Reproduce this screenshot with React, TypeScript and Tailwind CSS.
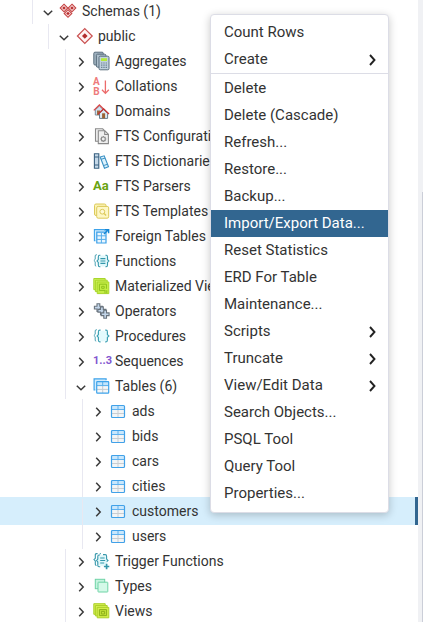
import type { ReactNode } from "react";

const chevronDown = <path d="M2.8 6.7 7 10.7 11.2 6.7" />;
const chevronRight = <path d="M5.2 3.8 9.2 8 5.2 12.2" />;

function Chevron({ open }: { open?: boolean }) {
  return (
    <svg viewBox="0 0 14 14" className="block size-3.5" fill="none" stroke="#3a3a3a" strokeWidth="1.5">
      {open ? chevronDown : chevronRight}
    </svg>
  );
}

function Diamond({ x, y }: { x: number; y: number }) {
  return (
    <g transform={`translate(${x} ${y})`}>
      <path d="M0-3.8 3.8 0 0 3.8-3.8 0Z" fill="#fbe3e3" stroke="#c54545" strokeWidth="1.1" />
      <path d="M0-1.8 1.8 0 0 1.8-1.8 0Z" fill="#b92f2f" />
    </g>
  );
}

const icons: Record<string, ReactNode> = {
  schemas: (
    <>
      <Diamond x={4} y={5} />
      <Diamond x={12} y={5} />
      <Diamond x={8} y={10.5} />
    </>
  ),
  schema: (
    <>
      <path d="M8.8.6 16.2 8 8.8 15.4 1.4 8Z" fill="#fff3f3" stroke="#c94f4f" strokeWidth="1.2" />
      <path d="M8.8 5.2 11.6 8 8.8 10.8 6 8Z" fill="#b22d2d" />
    </>
  ),
  aggregates: (
    <g stroke="#5b6f7e">
      <rect x=".8" y="-.8" width="9.5" height="12.8" rx="1.2" fill="#9eb0be" />
      <rect x="3.4" y="1.2" width="9.5" height="13" rx="1.2" fill="#aebfcc" />
      <rect x="6" y="3.2" width="10" height="13.6" rx="1.2" fill="#c1d1dd" />
      <rect x="8" y="5.2" width="6" height="2.8" fill="#b4ea3c" stroke="none" />
      <path d="M8 10h1.4m.9 0h1.4m.9 0h1.4M8 12.2h1.4m.9 0h1.4m.9 0h1.4M8 14.4h1.4m.9 0h1.4m.9 0h1.4" stroke="#6d8495" strokeWidth="1.2" />
    </g>
  ),
  collations: (
    <>
      <text x="0" y="7.3" fontSize="10" fontWeight="700" fill="#ee7b7b">A</text>
      <text x=".3" y="16.8" fontSize="10" fontWeight="700" fill="#ee7b7b">B</text>
      <path d="M12.4 2.4v13M9 11.7l3.4 3.7 3.4-3.7" fill="none" stroke="#ec6b6b" strokeWidth="1.3" />
    </>
  ),
  domains: (
    <>
      <path d="M2.3 6.8 6.4 3 10.4 6.8V12H2.3Z" fill="#cfe0ef" stroke="#7b8c9a" />
      <path d="M4 7.5h3V12H4z" fill="#9a6b42" />
      <path d="M.8 7.4 6.4 2 12 7.4" fill="none" stroke="#d84a4a" strokeWidth="1.3" />
      <path d="M6.5 10.2 10.6 6.6 14.6 10.2V15.4H6.5Z" fill="#dce9f4" stroke="#687b8a" />
      <path d="M9.1 10.3h3v5h-3z" fill="#9a6235" />
      <path d="M5.2 11 10.6 5.8 16 11" fill="none" stroke="#ca3434" strokeWidth="1.3" />
    </>
  ),
  configurations: (
    <g fill="#efefef" stroke="#8a8a8a" strokeWidth="1.1">
      <path d="M5 13.2H2.5V.8h7.2l2 2" />
      <path d="M5.3 2.8h6.6L15.4 6.3V15.6H5.3Z" />
      <path d="M11.7 3v3.5h3.7" fill="none" />
      <circle cx="10.3" cy="11" r="2" />
      <path d="M10.3 8v1m0 4v1M7.3 11h1m4 0h1M8.2 8.9l.7.7m2.8 2.8.7.7m0-4.2-.7.7m-2.8 2.8-.7.7" />
    </g>
  ),
  dictionaries: (
    <>
      <path d="M1.4.8h4.4v14.4H1.4Z" fill="#c4d8e8" stroke="#3a6180" strokeWidth="1.1" />
      <path d="M1.4 4h4.4M1.4 12h4.4" stroke="#3a6180" />
      <path d="m7.2 4 4-1.2 4.3 11-4 1.5Z" fill="#dcf2fd" stroke="#3b91c4" strokeWidth="1.1" />
      <path d="m8.1 6.3 4-1.2M10.4 12.6l4.1-1.3" stroke="#3b91c4" />
    </>
  ),
  parsers: (
    <text x="0" y="12" fontSize="13" fontWeight="700" fill="#69a312">Aa</text>
  ),
  templates: (
    <g stroke="#dcc959">
      <rect x="1.5" y="1" width="11.5" height="11.5" rx="1.5" fill="#fbf3b4" />
      <rect x="3.7" y="3.4" width="12" height="11.8" rx="1.5" fill="#fdf7c5" />
      <circle cx="9.3" cy="8.7" r="2.4" fill="#fff9d6" />
      <path d="m11.1 10.5 2 2" strokeWidth="1.3" />
    </g>
  ),
  foreign: (
    <>
      <path d="M2.5 12.8H1.4V1.6h10.4v1.2" fill="#d5edfc" stroke="#3ea3ea" strokeWidth="1.1" />
      <path d="M3.8 4.2h9.2V15H3.8Z" fill="#eaf6fe" stroke="#3a9fe8" strokeWidth="1.2" />
      <path d="M3.8 7.8h9.2M3.8 11.4h9.2M8.4 5v10" stroke="#56aeeb" />
      <path d="m11 6 4-4M12 1.7h3.6v3.6" fill="none" stroke="#1587d6" strokeWidth="1.5" />
    </>
  ),
  functions: (
    <>
      <path d="M4 1.8H3.2Q2.2 1.8 2.2 3v3.3L.9 7.5l1.3 1.2V12q0 1.2 1 1.2" fill="none" stroke="#4ba3b5" />
      <circle cx="10" cy="8" r="5.7" fill="#e0f8fb" />
      <g fill="none" stroke="#3597ab" strokeWidth="1.1">
        <path d="M7.4 2.3H6.6Q5.3 2.3 5.3 4v2.6L4 8l1.3 1.4V12q0 1.7 1.3 1.7h.8" />
        <path d="M12.4 2.3h.8q1.3 0 1.3 1.7v2.6L15.9 8l-1.4 1.4V12q0 1.7-1.3 1.7h-.8" />
        <path d="M7.4 5.6h5M7.4 8h5M7.4 10.4h5" />
      </g>
    </>
  ),
  matviews: (
    <g stroke="#a9d62c">
      <path d="M.8.5h11.4v11.2H.8z" fill="#cdf05a" />
      <path d="M2.4 2.2h11.8v11.4H2.4z" fill="#cdf05a" />
      <path d="M4.2 4h11.6v11.6H4.2z" fill="#c4ed45" />
      <path d="M12.2 12.4H6.4V6.2h7v4.6M11.2 10.3H8.7V8.3h2.5zM12 12.2v3M13.8 12.2v3" fill="none" stroke="#8fc11c" />
    </g>
  ),
  operators: (
    <g fill="#c3d6ea" stroke="#69737d" strokeWidth="1.1">
      <path d="M4 .8h2.8v2.5h2.6V6H6.8v2.5H4V6H1.4V3.3H4Z" />
      <path d="M7.5 3.9h2.8v2.5h2.6v2.7h-2.6v2.5H7.5V9.1H4.9V6.4h2.6Z" />
      <path d="M10.8 7.3h2.7v2.6h2.6v2.7h-2.6v2.6h-2.7v-2.6H8.2V9.9h2.6Z" />
    </g>
  ),
  procedures: (
    <>
      <path d="M4 1.8H3.2Q2.2 1.8 2.2 3v3.3L.9 7.5l1.3 1.2V12q0 1.2 1 1.2" fill="none" stroke="#4ba3b5" />
      <circle cx="10" cy="8" r="5.5" fill="#e3fafd" />
      <g fill="none" stroke="#3fa2b5" strokeWidth="1.2">
        <path d="M7.6 2.2h-.8Q5.4 2.2 5.4 4v2.6L4.1 8l1.3 1.4V12q0 1.8 1.4 1.8h.8" />
        <path d="M12.2 2.2h.8q1.4 0 1.4 1.8v2.6L15.9 8l-1.5 1.4V12q0 1.8-1.4 1.8h-.8" />
      </g>
    </>
  ),
  sequences: (
    <text x="0" y="11" fontSize="11" fontWeight="700" fill="#8257cf">1..3</text>
  ),
  tables: (
    <>
      <path d="M2.4 12H1.1V.8h12v1.4" fill="#d4edfd" stroke="#3ea3ea" strokeWidth="1.2" />
      <path d="M3.7 3.7h12v11.5h-12Z" fill="#f5f7f8" />
      <path d="M4 4h11.5v3.5H4z" fill="#c3e5fc" />
      <path d="M4 11.4h11.5M9.7 8v7" stroke="#c3cbd1" />
      <path d="M4 7.6h11.5M9.7 4v3.5" stroke="#56aeeb" />
      <rect x="3.7" y="3.7" width="12" height="11.5" rx=".6" fill="none" stroke="#3ea3ea" strokeWidth="1.2" />
    </>
  ),
  table: (
    <g transform="translate(1 2)">
      <rect x=".5" y=".5" width="13" height="12" rx="1" fill="#f3f5f6" />
      <path d="M1 1h12v3H1z" fill="#c9e7fc" />
      <path d="M1 8.5h12M7 5v7" stroke="#c9cdd1" />
      <path d="M1 4.5h12M7 1v3" stroke="#5eb1ef" />
      <rect x=".5" y=".5" width="13" height="12" rx="1" fill="none" stroke="#41a1e8" strokeWidth="1.2" />
    </g>
  ),
  triggers: (
    <>
      <circle cx="9" cy="7.4" r="5.5" fill="#e0f8fb" />
      <g fill="none" stroke="#3597ab" strokeWidth="1.1">
        <path d="M4.6.6H3.5Q2.3.6 2.3 2v3.3L1 6.6l1.3 1.3v3.4q0 1.2 1.2 1.2" />
        <path d="M7 2H6Q4.8 2 4.8 3.4V6L3.6 7.5l1.2 1.4v3.3q0 1.6 1.2 1.6h1.2" />
        <path d="M6.8.6h1M10 1.6h2.2q1.4 0 1.4 1.6v2.9L15 7.4l-1.3 1.2M7.2 5h4.4M7.2 7.5h5M7.2 10h4" />
        <path d="M13.6 10.8v5.4M10.9 13.5h5.4" strokeWidth="1.7" />
      </g>
    </>
  ),
  types: (
    <g stroke="#6fd3a6">
      <rect x="2.3" y="1.3" width="9.4" height="9.4" fill="#c6f4df" />
      <rect x="5" y="4.2" width="9.8" height="9.8" rx=".5" fill="#d4f9e8" />
    </g>
  ),
  views: (
    <g stroke="#acd02a">
      <path d="M.8.7h11.4v10.6H.8z" fill="#d5ee50" />
      <path d="M2.4 2.5h11.8v10.4H2.4z" fill="#d5ee50" />
      <path d="M4.2 4.4h11.6v10.4H4.2z" fill="#d4ee4b" />
      <path d="M6.4 6.6h7.2v6H6.4zM8.4 8.4h3.2V11H8.4z" fill="#c2e137" stroke="#8eb119" />
    </g>
  ),
};

type Node = { label: string; icon: string; level: 0 | 1 | 2 | 3; open?: boolean; selected?: boolean };

const nodes: Node[] = [
  { label: "Schemas (1)", icon: "schemas", level: 0, open: true },
  { label: "public", icon: "schema", level: 1, open: true },
  { label: "Aggregates", icon: "aggregates", level: 2 },
  { label: "Collations", icon: "collations", level: 2 },
  { label: "Domains", icon: "domains", level: 2 },
  { label: "FTS Configurations", icon: "configurations", level: 2 },
  { label: "FTS Dictionaries", icon: "dictionaries", level: 2 },
  { label: "FTS Parsers", icon: "parsers", level: 2 },
  { label: "FTS Templates", icon: "templates", level: 2 },
  { label: "Foreign Tables", icon: "foreign", level: 2 },
  { label: "Functions", icon: "functions", level: 2 },
  { label: "Materialized Views", icon: "matviews", level: 2 },
  { label: "Operators", icon: "operators", level: 2 },
  { label: "Procedures", icon: "procedures", level: 2 },
  { label: "Sequences", icon: "sequences", level: 2 },
  { label: "Tables (6)", icon: "tables", level: 2, open: true },
  { label: "ads", icon: "table", level: 3 },
  { label: "bids", icon: "table", level: 3 },
  { label: "cars", icon: "table", level: 3 },
  { label: "cities", icon: "table", level: 3 },
  { label: "customers", icon: "table", level: 3, selected: true },
  { label: "users", icon: "table", level: 3 },
  { label: "Trigger Functions", icon: "triggers", level: 2 },
  { label: "Types", icon: "types", level: 2 },
  { label: "Views", icon: "views", level: 2 },
];

const indents = ["ml-8", "ml-12", "ml-[65px]", "ml-[82px]"];

function TreeRow({ node }: { node: Node }) {
  return (
    <li
      role="treeitem"
      aria-level={node.level + 1}
      aria-expanded={!!node.open}
      aria-selected={!!node.selected}
      className={
        node.selected
          ? "-mt-0.5 -mb-px border-r-3 border-[#326690] bg-[#d6eefc] pt-0.5 pb-px"
          : undefined
      }
    >
      <div className={`flex h-[25px] items-center border-l border-[#e8e8f1] pb-0.5 pl-2 ${indents[node.level]}`}>
        <button type="button" aria-label={`Toggle ${node.label}`} className="mr-[5px]">
          <Chevron open={node.open} />
        </button>
        <svg viewBox="0 0 16 16" className="mr-1.5 size-4 shrink-0 overflow-visible" aria-hidden="true">
          {icons[node.icon]}
        </svg>
        <span className="whitespace-nowrap">{node.label}</span>
      </div>
    </li>
  );
}

const menuGroups: { label: string; submenu?: boolean; active?: boolean }[][] = [
  [{ label: "Count Rows" }, { label: "Create", submenu: true }],
  [
    { label: "Delete" },
    { label: "Delete (Cascade)" },
    { label: "Refresh..." },
    { label: "Restore..." },
    { label: "Backup..." },
    { label: "Import/Export Data...", active: true },
    { label: "Reset Statistics" },
    { label: "ERD For Table" },
    { label: "Maintenance..." },
    { label: "Scripts", submenu: true },
    { label: "Truncate", submenu: true },
    { label: "View/Edit Data", submenu: true },
    { label: "Search Objects..." },
    { label: "PSQL Tool" },
    { label: "Query Tool" },
    { label: "Properties..." },
  ],
];

function ContextMenu() {
  return (
    <div
      role="menu"
      className="absolute top-[14px] left-[210px] w-[179px] rounded border border-[#dcdde6] bg-white pt-1 pb-[5px] text-[15px] shadow-[0_2px_8px_rgba(0,0,0,0.22)]"
    >
      {menuGroups.map((group, i) => (
        <div key={i} role="group" className={i > 0 ? "border-t border-[#dcdde6] pt-px" : undefined}>
          {group.map((item) => (
            <button
              key={item.label}
              type="button"
              role="menuitem"
              className={`flex h-[27px] w-full items-center justify-between pr-2 pl-[13px] text-left whitespace-nowrap ${
                item.active ? "bg-[#326690] text-white" : ""
              }`}
            >
              {item.label}
              {item.submenu && (
                <svg viewBox="0 0 14 14" className="size-3.5" fill="none" stroke="#222" strokeWidth="1.9">
                  <path d="M4 2 8.5 7 4 12" />
                </svg>
              )}
            </button>
          ))}
        </div>
      ))}
    </div>
  );
}

export default function App() {
  return (
    <main className="relative flex h-screen overflow-hidden bg-white font-[Roboto,sans-serif] text-sm text-[#333]">
      <ul role="tree" className="-mt-px min-w-0 flex-1">
        {nodes.map((node) => (
          <TreeRow key={node.label} node={node} />
        ))}
      </ul>
      <div className="flex w-[5px] flex-col bg-[#f0f1f4] pt-48">
        <div className="w-px flex-1 self-end bg-[#cbced8]" />
      </div>
      <ContextMenu />
    </main>
  );
}
